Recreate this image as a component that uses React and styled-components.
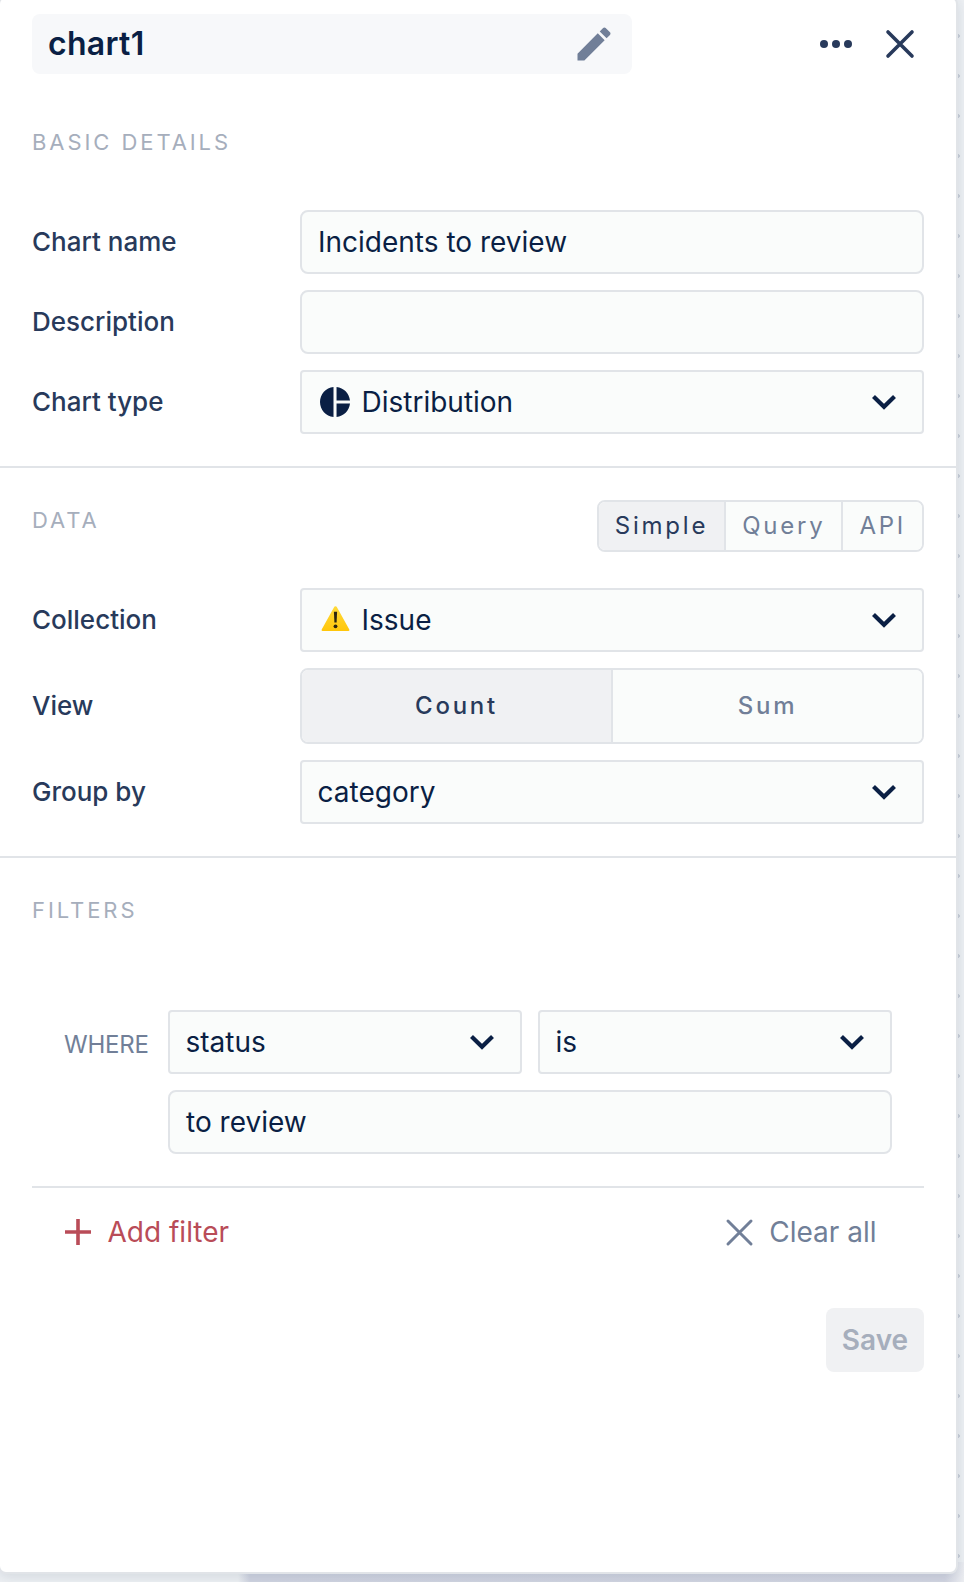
import React from "react";
import styled, { createGlobalStyle, css } from "styled-components";

const color = {
  ink: "#0a1f44",
  label: "#283a5b",
  muted: "#717f98",
  faint: "#a6aebc",
  line: "#e1e4e8",
  field: "#fafcfb",
  active: "#f0f1f3",
  title: "#f7f8fa",
  danger: "#b94c58",
};

const GlobalStyle = createGlobalStyle`
  * { box-sizing: border-box; }
  body {
    margin: 0;
    overflow: hidden;
    font-family: Inter, "Liberation Sans", sans-serif;
    -webkit-font-smoothing: antialiased;
  }
  button { font: inherit; }
`;

const Canvas = styled.div`
  height: 1582px;
  overflow: hidden;
  background:
    radial-gradient(circle at 50% 50%, #c9d0d9 1.6px, transparent 2.2px) -22px 16px / 40px 40px,
    linear-gradient(90deg, transparent 238px, #d0d4e1 250px, #d3d6e2 945px, #eceef2 964px) 0 1562px / 964px 20px no-repeat,
    #eef1f4;
`;

const Panel = styled.main`
  display: flex;
  flex-direction: column;
  width: 960px;
  height: 1578px;
  margin: -4px 0 0 -2px;
  border: 2px solid ${color.line};
  border-radius: 8px;
  background: #fff;
  box-shadow: 0 3px 14px rgba(10, 31, 68, 0.12);
`;

const Header = styled.header`
  display: flex;
  align-items: center;
  padding: 16px 42px 0 32px;
`;

const TitleBox = styled.div`
  display: flex;
  align-items: center;
  justify-content: space-between;
  width: 600px;
  height: 60px;
  padding: 0 16px;
  border-radius: 8px;
  background: ${color.title};
  color: ${color.muted};
`;

const Title = styled.h1`
  margin: 0;
  color: ${color.ink};
  font-size: 32px;
  line-height: 60px;
  font-weight: 600;
  letter-spacing: 0.3px;
`;

const HeaderActions = styled.div`
  display: flex;
  align-items: center;
  gap: 34px;
  margin-left: auto;
  color: ${color.label};
`;

const Icon = styled.svg`
  display: block;
  flex: none;
  overflow: visible;
`;

const Section = styled.section`
  padding: 0 32px 32px;
  border-bottom: ${(p) => (p.$last ? 0 : 2)}px solid ${color.line};
`;

const SectionHead = styled.div`
  display: flex;
  justify-content: space-between;
  align-items: flex-start;
  height: ${(p) => p.$height}px;
  padding-top: ${(p) => p.$top ?? 32}px;
`;

const SectionTitle = styled.h2`
  margin: 0;
  color: ${color.faint};
  font-size: 22px;
  font-weight: 400;
  line-height: 40px;
  letter-spacing: 2.93px;
`;

const Fields = styled.div`
  display: grid;
  gap: 16px;
`;

const Row = styled.div`
  display: grid;
  grid-template-columns: 268px 1fr;
  align-items: center;
`;

const Label = styled.label`
  color: ${color.label};
  font-size: 26px;
  font-weight: 500;
  line-height: 32px;
`;

const box = css`
  display: flex;
  align-items: center;
  height: 64px;
  min-width: 0;
  padding: 0 26px 0 16px;
  border: 2px solid ${color.line};
  background: ${color.field};
  color: ${color.ink};
  font-size: 28px;
  line-height: 34px;
`;

const TextField = styled.div`
  ${box}
  border-radius: 8px;
`;

const SelectBox = styled.div`
  ${box}
  padding-left: 15.5px;
  border-radius: 4px;
`;

const SelectValue = styled.span`
  flex: 1;
`;

const SelectIcon = styled.span`
  display: flex;
  width: 36px;
  margin: 0 8.5px 0 -0.5px;
`;

const Segments = styled.div`
  display: flex;
  height: ${(p) => (p.$wide ? 76 : 52)}px;
  border: 2px solid ${color.line};
  border-radius: 8px;
  overflow: hidden;
`;

const Segment = styled.button`
  flex: ${(p) => (p.$wide ? "1 1 0" : "0 0 auto")};
  padding: 0 ${(p) => (p.$wide ? 0 : 16)}px;
  border: 0;
  background: ${(p) => (p.$active ? color.active : color.field)};
  color: ${(p) => (p.$active ? color.label : color.muted)};
  font-size: 24px;
  font-weight: ${(p) => (p.$wide ? 500 : 400)};
  line-height: 30px;
  letter-spacing: 2.76px;

  & + & {
    border-left: 2px solid ${color.line};
  }
`;

const Filter = styled.div`
  display: grid;
  grid-template-columns: 88px 354px 354px;
  gap: 16px;
  padding: 0 32px 32px;
  border-bottom: 2px solid ${color.line};
`;

const Where = styled.span`
  align-self: center;
  padding-top: 5px;
  color: ${color.muted};
  font-size: 24px;
  line-height: 30px;
  letter-spacing: -0.2px;
`;

const FilterValue = styled(TextField)`
  grid-column: 2 / 4;
`;

const FilterActions = styled.div`
  display: flex;
  justify-content: space-between;
  align-items: center;
  height: 88px;
  padding: 0 47.5px 0 33px;
`;

const TextButton = styled.button`
  display: flex;
  align-items: center;
  gap: 16.5px;
  padding: 0;
  border: 0;
  background: none;
  color: ${(p) => (p.$danger ? color.danger : color.muted)};
  font-size: 28px;
  line-height: 34px;
`;

const Footer = styled.footer`
  display: flex;
  justify-content: flex-end;
  padding-top: 32px;
`;

const SaveButton = styled.button`
  width: 98px;
  height: 64px;
  padding: 0;
  border: 0;
  border-radius: 8px;
  background: ${color.active};
  color: ${color.faint};
  font-size: 28px;
  font-weight: 600;
`;

const Pencil = () => (
  <Icon width="44" height="44" viewBox="0 0 24 24" fill="currentColor">
    <path d="M3 17.25V21h3.75L17.81 9.94l-3.75-3.75L3 17.25zM20.71 7.04c.39-.39.39-1.02 0-1.41l-2.34-2.34c-.39-.39-1.02-.39-1.41 0l-1.83 1.83 3.75 3.75 1.83-1.83z" />
  </Icon>
);

const Dots = () => (
  <Icon width="32" height="8" viewBox="0 0 32 8" fill="currentColor">
    <circle cx="4" cy="4" r="4" />
    <circle cx="16" cy="4" r="4" />
    <circle cx="28" cy="4" r="4" />
  </Icon>
);

const Cross = ({ size, stroke }) => (
  <Icon width={size} height={size} viewBox={`0 0 ${size} ${size}`} fill="none" stroke="currentColor" strokeWidth={stroke} strokeLinecap="round">
    <path d={`M2 2L${size - 2} ${size - 2}M${size - 2} 2L2 ${size - 2}`} />
  </Icon>
);

const Plus = () => (
  <Icon width="26" height="26" viewBox="0 0 26 26" fill="none" stroke="currentColor" strokeWidth="3.6">
    <path d="M13 0V26M0 13H26" />
  </Icon>
);

const Chevron = () => (
  <Icon width="24" height="16" viewBox="0 0 24 16" fill="none" stroke="currentColor" strokeWidth="4.2">
    <path d="M1.5 2.4L12 12.7L22.5 2.4" />
  </Icon>
);

const Pie = () => (
  <Icon width="36" height="36" viewBox="0 0 24 24" fill="currentColor">
    <path d="M11 2v20c-5.07-.5-9-4.79-9-10s3.93-9.5 9-10zm2.03 0v8.99H22c-.47-4.74-4.24-8.52-8.97-8.99zm0 11.01V22c4.74-.47 8.5-4.25 8.97-8.99h-8.97z" />
  </Icon>
);

const Warning = () => (
  <Icon width="36" height="36" viewBox="0 0 36 36">
    <defs>
      <linearGradient id="warn" x1="0" y1="0" x2="0" y2="1">
        <stop offset="0" stopColor="#ffda3a" />
        <stop offset="1" stopColor="#ffc60a" />
      </linearGradient>
    </defs>
    <path d="M18.500 4.300q1 0 1.600 1.100L32.300 27.500q.6 1.400-.8 1.500H5.500q-1.400-.1-.8-1.500L16.900 5.400q.6-1.100 1.600-1.100z" fill="url(#warn)" />
    <path d="M16.900 9.800h3.200l-.5 10.700h-2.200z" fill="#2b2510" />
    <circle cx="18.500" cy="24.300" r="1.900" fill="#2b2510" />
  </Icon>
);

const Select = ({ icon, children }) => (
  <SelectBox>
    {icon && <SelectIcon>{icon}</SelectIcon>}
    <SelectValue>{children}</SelectValue>
    <Chevron />
  </SelectBox>
);

export default function App() {
  return (
    <Canvas>
      <GlobalStyle />
      <Panel>
        <Header>
          <TitleBox>
            <Title>chart1</Title>
            <Pencil />
          </TitleBox>
          <HeaderActions>
            <Dots />
            <Cross size={28} stroke={3.6} />
          </HeaderActions>
        </Header>

        <Section>
          <SectionHead $height={136} $top={48}>
            <SectionTitle>BASIC DETAILS</SectionTitle>
          </SectionHead>
          <Fields>
            <Row>
              <Label>Chart name</Label>
              <TextField>Incidents to review</TextField>
            </Row>
            <Row>
              <Label>Description</Label>
              <TextField />
            </Row>
            <Row>
              <Label>Chart type</Label>
              <Select icon={<Pie />}>Distribution</Select>
            </Row>
          </Fields>
        </Section>

        <Section>
          <SectionHead $height={120}>
            <SectionTitle>DATA</SectionTitle>
            <Segments>
              <Segment $active>Simple</Segment>
              <Segment>Query</Segment>
              <Segment>API</Segment>
            </Segments>
          </SectionHead>
          <Fields>
            <Row>
              <Label>Collection</Label>
              <Select icon={<Warning />}>Issue</Select>
            </Row>
            <Row>
              <Label>View</Label>
              <Segments $wide>
                <Segment $wide $active>Count</Segment>
                <Segment $wide>Sum</Segment>
              </Segments>
            </Row>
            <Row>
              <Label>Group by</Label>
              <Select>category</Select>
            </Row>
          </Fields>
        </Section>

        <Section $last>
          <SectionHead $height={152}>
            <SectionTitle>FILTERS</SectionTitle>
          </SectionHead>
          <Filter>
            <Where>WHERE</Where>
            <Select>status</Select>
            <Select>is</Select>
            <FilterValue>to review</FilterValue>
          </Filter>
          <FilterActions>
            <TextButton $danger>
              <Plus />
              Add filter
            </TextButton>
            <TextButton>
              <Cross size={27} stroke={3} />
              Clear all
            </TextButton>
          </FilterActions>
          <Footer>
            <SaveButton>Save</SaveButton>
          </Footer>
        </Section>
      </Panel>
    </Canvas>
  );
}
